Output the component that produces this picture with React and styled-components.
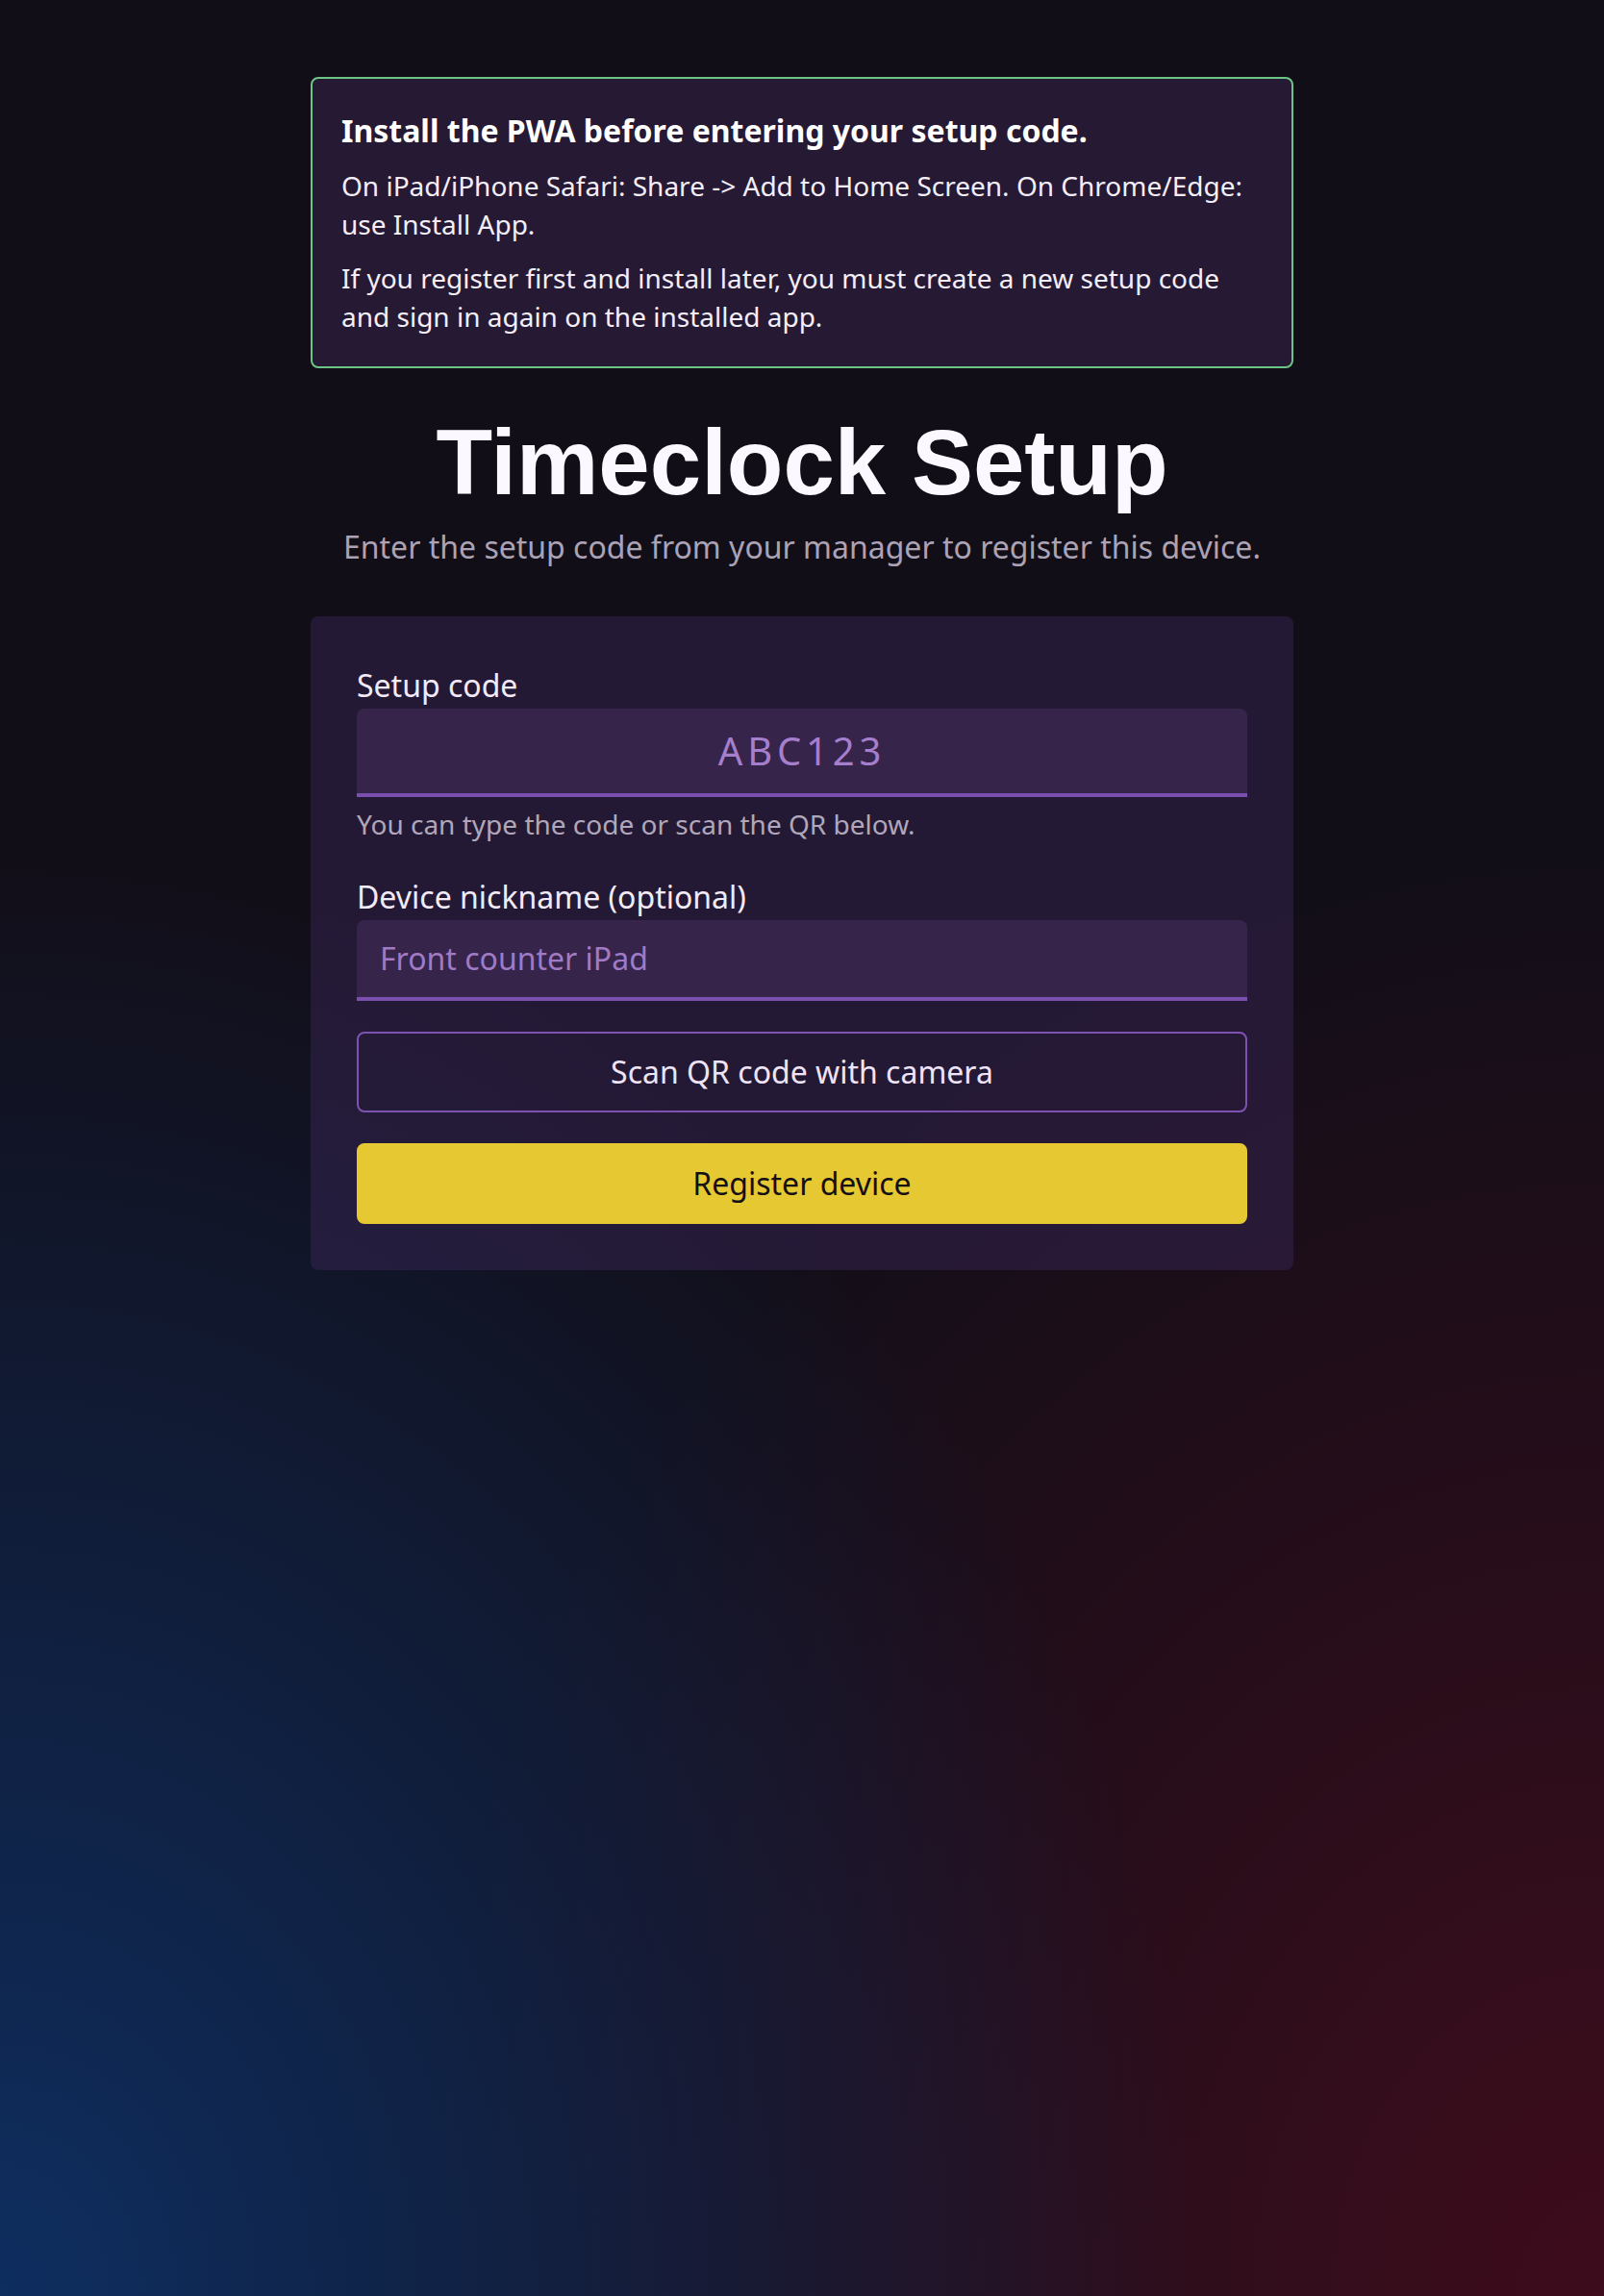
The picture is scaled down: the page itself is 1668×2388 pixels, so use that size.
import React from 'react'
import styled, { createGlobalStyle } from 'styled-components'

const GlobalStyle = createGlobalStyle`
  * {
    box-sizing: border-box;
  }
  html, body {
    margin: 0;
    padding: 0;
    background: #120e18;
  }
  body {
    font-family: "Noto Sans", "Open Sans", sans-serif;
    color: #f4eef8;
  }
`

const Page = styled.div`
  min-height: 2388px;
  padding: 80px 24px;
  display: flex;
  flex-direction: column;
  align-items: center;
  background:
    radial-gradient(ellipse 1250px 1500px at 0% 100%, rgba(14, 46, 96, 1) 0%, rgba(14, 46, 96, 0) 100%),
    radial-gradient(ellipse 1250px 1500px at 100% 100%, rgba(62, 12, 28, 1) 0%, rgba(62, 12, 28, 0) 100%),
    #120e18;
`

const Column = styled.main`
  width: 1022px;
  display: flex;
  flex-direction: column;
`

const Notice = styled.section`
  border: 2px solid #6cc486;
  border-radius: 8px;
  background: rgba(44, 30, 62, 0.75);
  padding: 30px 30px 32px;
  display: flex;
  flex-direction: column;
  gap: 16px;
`

const NoticeTitle = styled.h2`
  margin: 0 0 -3px;
  font-size: 32px;
  line-height: 48px;
  font-weight: 700;
  color: #ffffff;
`

const NoticeText = styled.p`
  margin: 0;
  font-size: 28px;
  line-height: 40px;
  color: #f4eef8;
`

const Heading = styled.h1`
  margin: 50px 0 16px;
  text-align: center;
  font-family: "Liberation Sans", Arial, sans-serif;
  font-size: 96px;
  line-height: 96px;
  font-weight: 700;
  color: #fbf8ff;
`

const Subtitle = styled.p`
  margin: 0 0 48px;
  text-align: center;
  font-size: 32px;
  line-height: 48px;
  color: #aba3b5;
`

const Card = styled.form`
  border-radius: 8px;
  background: rgba(54, 36, 80, 0.52);
  padding: 48px;
  display: flex;
  flex-direction: column;
`

const Label = styled.label`
  display: block;
  font-size: 32px;
  line-height: 48px;
  color: #f2ebf7;
  margin-top: ${(p) => (p.$spaced ? '32px' : '0')};
`

const Input = styled.input`
  display: block;
  width: 100%;
  border: none;
  border-bottom: 4px solid #7a4fae;
  border-radius: 8px 8px 0 0;
  background: #36244b;
  padding: 16px 24px;
  font-family: "Noto Sans", "Open Sans", sans-serif;
  font-size: ${(p) => (p.$code ? '40px' : '32px')};
  line-height: ${(p) => (p.$code ? '56px' : '48px')};
  letter-spacing: ${(p) => (p.$code ? '0.12em' : 'normal')};
  text-align: ${(p) => (p.$code ? 'center' : 'left')};
  color: #a57fcd;
  outline: none;

  &::placeholder {
    color: #a07ac4;
    opacity: 1;
  }
`

const Hint = styled.p`
  margin: 8px 0 0;
  font-size: 28px;
  line-height: 40px;
  color: #b1a7bb;
`

const Button = styled.button`
  display: block;
  width: 100%;
  margin-top: 32px;
  padding: 16px 24px;
  border-radius: 8px;
  font-family: "Noto Sans", "Open Sans", sans-serif;
  font-size: 32px;
  line-height: 48px;
  cursor: pointer;
  border: 2px solid ${(p) => (p.$primary ? '#e6c833' : '#7d52b0')};
  background: ${(p) => (p.$primary ? '#e6c833' : 'transparent')};
  color: ${(p) => (p.$primary ? '#141014' : '#efe4f7')};
`

const App = () => {
  return (
    <>
      <GlobalStyle />
      <Page>
        <Column>
          <Notice>
            <NoticeTitle>Install the PWA before entering your setup code.</NoticeTitle>
            <NoticeText>
              On iPad/iPhone Safari: Share -&gt; Add to Home Screen. On Chrome/Edge: use Install App.
            </NoticeText>
            <NoticeText>
              If you register first and install later, you must create a new setup code and sign in again on the installed app.
            </NoticeText>
          </Notice>

          <Heading>Timeclock Setup</Heading>
          <Subtitle>Enter the setup code from your manager to register this device.</Subtitle>

          <Card onSubmit={(e) => e.preventDefault()}>
            <Label htmlFor="code">Setup code</Label>
            <Input id="code" $code defaultValue="ABC123" />
            <Hint>You can type the code or scan the QR below.</Hint>

            <Label htmlFor="nickname" $spaced>Device nickname (optional)</Label>
            <Input id="nickname" placeholder="Front counter iPad" />

            <Button type="button">Scan QR code with camera</Button>
            <Button type="submit" $primary>Register device</Button>
          </Card>
        </Column>
      </Page>
    </>
  )
}

export default App
